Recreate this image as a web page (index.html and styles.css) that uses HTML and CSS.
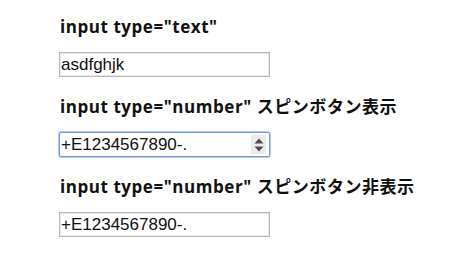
FILE: index.html
```html
<!DOCTYPE html>
<html lang="ja">
<head>
  <meta charset="UTF-8" />
  <title>input type="number" スピンボタン</title>
  <link rel="stylesheet" href="styles.css">
</head>
<body>
  <div class="demo">
    <h2>input type="text"</h2>
    <input class="field" type="text" value="asdfghjk">
  </div>

  <div class="demo">
    <h2>input type="number" スピンボタン表示</h2>
    <div class="spin-wrap">
      <input class="field focused" type="text" value="+E1234567890-.">
      <span class="spin">
        <svg width="10" height="14" viewBox="0 0 10 14">
          <path d="M5 0.5 L9.5 5.5 L0.5 5.5 Z" fill="#4d4d4d" />
          <path d="M5 13.5 L9.5 8.5 L0.5 8.5 Z" fill="#4d4d4d" />
        </svg>
      </span>
    </div>
  </div>

  <div class="demo">
    <h2>input type="number" スピンボタン非表示</h2>
    <input class="field" type="text" value="+E1234567890-.">
  </div>
</body>
</html>
```

FILE: styles.css
```css
body {
  margin: 0;
  padding: 10px 0 0 59px;
  background: #fff;
  font-family: "Open Sans", "Noto Sans CJK JP", sans-serif;
  color: #111;
}

.demo {
  margin-bottom: 13px;
}

h2 {
  font-size: 17px;
  font-weight: bold;
  letter-spacing: 0.55px;
  margin: 0 0 0 1px;
  line-height: 34px;
}

.field {
  display: block;
  box-sizing: border-box;
  width: 211px;
  height: 25px;
  margin: 8px 0 0;
  padding: 0 1px;
  border: 1px solid #b9b9b9;
  box-shadow: inset 0 0 0 1px #e8e8e8;
  font-family: "Liberation Sans", Arial, sans-serif;
  font-size: 17px;
  color: #111;
  outline: none;
}

.field.focused {
  border-color: #6f9be0;
  box-shadow: 0 0 0 1px #b3cbef;
  border-radius: 2px;
}

.spin-wrap {
  position: relative;
  width: 211px;
}

.spin {
  position: absolute;
  right: 4px;
  top: 3px;
  bottom: 3px;
  width: 15px;
  background: #ebebeb;
  display: flex;
  align-items: center;
  justify-content: center;
}
```
